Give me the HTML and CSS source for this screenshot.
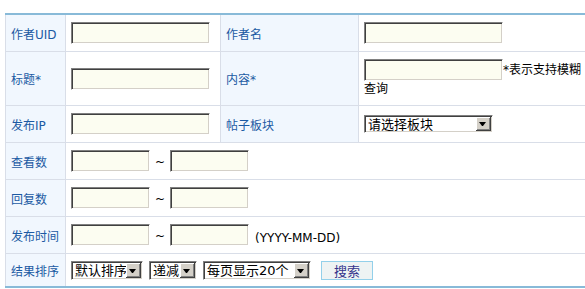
FILE: index.html
```html
<!DOCTYPE html>
<html lang="zh-CN">
<head>
<meta charset="utf-8">
<title>搜索帖子</title>
<link rel="stylesheet" href="styles.css">
</head>
<body>
<table class="search">
  <colgroup><col class="c1"><col class="c2"><col class="c3"><col class="c4"></colgroup>
  <tr>
    <th>作者UID</th><td><input class="txt" type="text"></td>
    <th>作者名</th><td><input class="txt" type="text"></td>
  </tr>
  <tr>
    <th>标题*</th><td><input class="txt" type="text"></td>
    <th>内容*</th><td class="note"><input class="txt" type="text">*表示支持模糊<br>查询</td>
  </tr>
  <tr>
    <th>发布IP</th><td><input class="txt" type="text"></td>
    <th>帖子板块</th>
    <td><span class="sel board"><select><option>请选择板块</option></select></span></td>
  </tr>
  <tr>
    <th>查看数</th>
    <td colspan="3"><div class="range"><input class="txt short" type="text"><span class="tilde">~</span><input class="txt short" type="text"></div></td>
  </tr>
  <tr>
    <th>回复数</th>
    <td colspan="3"><div class="range"><input class="txt short" type="text"><span class="tilde">~</span><input class="txt short" type="text"></div></td>
  </tr>
  <tr>
    <th>发布时间</th>
    <td colspan="3"><div class="range"><input class="txt short" type="text"><span class="tilde">~</span><input class="txt short" type="text"><span class="hint">(YYYY-MM-DD)</span></div></td>
  </tr>
  <tr class="last">
    <th>结果排序</th>
    <td colspan="3">
      <div class="ctrls">
        <span class="sel order"><select><option>默认排序</option></select></span>
        <span class="sel dir"><select><option>递减</option></select></span>
        <span class="sel per"><select><option>每页显示20个</option></select></span>
        <button class="btn" type="button">搜索</button>
      </div>
    </td>
  </tr>
</table>
</body>
</html>
```

FILE: styles.css
```css
html, body {
  margin: 0;
  padding: 0;
  background: #fff;
  overflow: hidden;
}
body {
  padding: 13px 0 0 5px;
  font: 12px "DejaVu Sans", "Noto Sans CJK SC", sans-serif;
  color: #000;
}
.search {
  width: 580px;
  table-layout: fixed;
  border-collapse: collapse;
  border-top: 2px solid #88bad8;
  border-bottom: 2px solid #88bad8;
  border-left: 1px solid #d9dee8;
}
.c1 { width: 60px; }
.c2 { width: 155px; }
.c3 { width: 138px; }
.c4 { width: auto; }

.search th,
.search td {
  padding: 7px 0 7px 5px;
  border-bottom: 1px solid #d9dee8;
  border-right: 1px solid #d9dee8;
  vertical-align: middle;
  text-align: left;
  white-space: nowrap;
}
.search th {
  font-weight: normal;
  background: #f1f7fe;
  color: #1b5aa3;
}
.search td { background: #fff; }
.search td:last-child { border-right: none; }
.search tr.last th,
.search tr.last td {
  border-bottom: none;
  padding-top: 7px;
  padding-bottom: 6px;
}
.note {
  line-height: 17px;
}

.txt {
  box-sizing: border-box;
  width: 139px;
  height: 22px;
  margin: 0;
  padding: 0 3px;
  font: 12px "DejaVu Sans", "Noto Sans CJK SC", sans-serif;
  background: #fcfdf1;
  border-top: 1px solid #808080;
  border-left: 1px solid #808080;
  border-right: 1px solid #ffffff;
  border-bottom: 1px solid #ffffff;
  box-shadow: inset 1px 1px 0 #404040, inset -1px -1px 0 #d4d0c8;
  outline: none;
}
.txt.short { width: 79px; }

.range {
  display: flex;
  align-items: flex-end;
  line-height: 14px;
}
.tilde {
  margin: 0 5px 3px;
}
.hint {
  margin: 0 0 1px 6px;
}

.ctrls {
  display: flex;
  align-items: center;
  gap: 6px;
}

.sel {
  position: relative;
  display: inline-block;
  height: 19px;
  vertical-align: middle;
}
.sel select {
  -webkit-appearance: none;
  appearance: none;
  box-sizing: border-box;
  display: block;
  width: 100%;
  height: 19px;
  margin: 0;
  padding: 0 16px 0 3px;
  border-radius: 0;
  font: 13px "DejaVu Sans", "Noto Sans CJK SC", sans-serif;
  color: #000;
  background: #fff;
  border-top: 1px solid #808080;
  border-left: 1px solid #808080;
  border-right: 1px solid #ffffff;
  border-bottom: 1px solid #ffffff;
  box-shadow: inset 1px 1px 0 #404040, inset -1px -1px 0 #d4d0c8;
  outline: none;
}
.sel::after {
  content: "";
  position: absolute;
  right: 2px;
  top: 2px;
  width: 15px;
  height: 15px;
  background: #d4d0c8;
  box-shadow: inset -1px -1px 0 #404040, inset 1px 1px 0 #ffffff, inset -2px -2px 0 #808080;
  pointer-events: none;
}
.sel::before {
  content: "";
  position: absolute;
  right: 7px;
  top: 8px;
  width: 1px;
  height: 0;
  border-left: 3px solid transparent;
  border-right: 3px solid transparent;
  border-top: 4px solid #000;
  z-index: 1;
  pointer-events: none;
}
.sel.board { width: 129px; height: 18px; }
.sel.board select { height: 18px; }
.sel.board::after { top: 2px; height: 14px; }
.sel.board::before { top: 7px; }
.sel.order { width: 72px; }
.sel.dir { width: 48px; }
.sel.per { width: 108px; }

.btn {
  box-sizing: border-box;
  width: 52px;
  height: 19px;
  margin: 0 0 0 4px;
  padding: 0;
  font: 13px "Noto Sans CJK SC", sans-serif;
  line-height: 17px;
  color: #34348c;
  background: #eef3f3;
  border: 1px solid #93d0ea;
  border-radius: 0;
}
```
